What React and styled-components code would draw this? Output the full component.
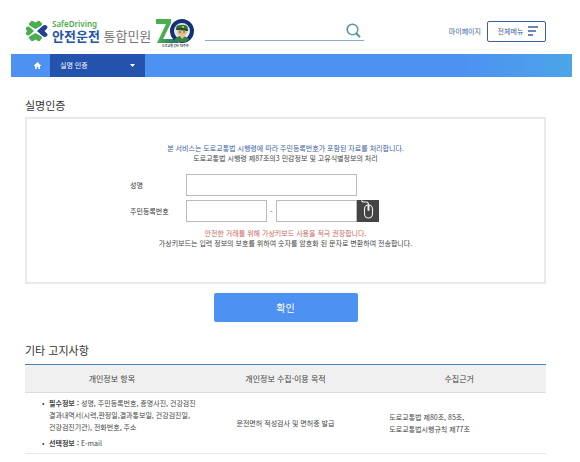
import React from "react"
import styled, { createGlobalStyle, ThemeProvider } from "styled-components"

const theme = {
  color: {
    primary: "#4d91f2",
    primaryDark: "#2453ae",
    link: "#3c5f9e",
    text: "#444",
    heading: "#333",
    warning: "#c9685c",
    line: "#e9e9e9",
    green: "#4bad50"
  }
}

const GlobalStyle = createGlobalStyle`
  * {
    box-sizing: border-box;
  }

  body {
    margin: 0;
    background: #fff;
    color: #444;
    font: 7px/11px "Noto Sans CJK KR", "Noto Sans", sans-serif;
    word-break: keep-all;
  }

  a {
    color: inherit;
    text-decoration: none;
  }

  button, input {
    font: inherit;
  }
`

const StyledPage = styled.div`
  padding: 0 8px 0 11px;
`

const StyledHeader = styled.header`
  display: flex;
  align-items: center;
  height: 54px;
  padding: 8px 26px 0 14px;
`

const StyledBrand = styled.a`
  display: flex;
  align-items: center;
  gap: 4px;
`

const StyledBrandText = styled.span`
  display: flex;
  flex-direction: column;
  padding: 1px 1px 0 0;
  white-space: nowrap;
`

const StyledBrandSub = styled.span(
  ({ theme }) => `
  font: 600 8px/8px "Noto Sans", sans-serif;
  color: ${theme.color.green};
`
)

const StyledBrandName = styled.span`
  font-size: 13px;
  line-height: 16px;
  color: #777;

  strong {
    color: #2453a6;
  }
`

const StyledAnniversary = styled.span`
  display: flex;
  flex-direction: column;
  align-items: center;
  padding-top: 6px;
  font-size: 3px;
  font-weight: 700;
  line-height: 6px;
  color: #333;
`

const StyledSearch = styled.form`
  display: flex;
  flex: 0 1 159px;
  min-width: 60px;
  height: 20px;
  margin-left: 11px;
  border-bottom: 1px solid #8cabd0;
`

const StyledSearchInput = styled.input`
  flex: 1;
  min-width: 0;
  padding: 0;
  border: 0;
  outline: 0;
  background: none;
`

const StyledIconButton = styled.button`
  display: flex;
  padding: 2px 3px;
  border: 0;
  background: none;
`

const StyledHeaderLinks = styled.div(
  ({ theme }) => `
  display: flex;
  align-items: center;
  gap: 6px;
  margin-left: auto;
  white-space: nowrap;
  color: ${theme.color.link};
`
)

const StyledMenuButton = styled.button(
  ({ theme }) => `
  display: flex;
  align-items: center;
  justify-content: center;
  gap: 4px;
  width: 59px;
  height: 21px;
  padding: 0 0 0 4px;
  border: 1px solid ${theme.color.link};
  border-radius: 2px;
  background: #fff;
  color: ${theme.color.link};
`
)

const StyledNav = styled.nav(
  ({ theme }) => `
  display: flex;
  height: 23px;
  background: linear-gradient(90deg, ${theme.color.primary} 80%, #4ca5e7);
  color: #fff;
`
)

const StyledHomeLink = styled.a`
  display: flex;
  align-items: center;
  justify-content: center;
  width: 39px;
  padding-left: 14px;
`

const StyledNavButton = styled.button(
  ({ theme }) => `
  display: flex;
  align-items: center;
  justify-content: space-between;
  width: 95px;
  padding: 0 10px;
  border: 0;
  background: ${theme.color.primaryDark};
  color: #fff;
`
)

const StyledMain = styled.main`
  padding: 20px 26px 0 14px;
`

const StyledTitle = styled.h2(
  ({ theme }) => `
  margin: 0;
  font-size: 11px;
  font-weight: 400;
  line-height: 16px;
  color: ${theme.color.heading};
`
)

const StyledPanel = styled.form(
  ({ theme }) => `
  margin-top: 4px;
  padding: 24px 12px 34px;
  border: 2px solid ${theme.color.line};
  text-align: center;
`
)

const StyledText = styled.p(
  ({ theme, $tone }) => `
  margin: 0;
  line-height: 10px;
  color: ${theme.color[$tone || "text"]};
`
)

const StyledFields = styled.div`
  display: grid;
  gap: 4px;
  max-width: 311px;
  margin: 11px auto 6px;
`

const StyledField = styled.div`
  display: flex;
  align-items: center;
  text-align: left;
`

const StyledLabel = styled.label`
  flex: 0 0 56px;
  color: #333;
`

const StyledInput = styled.input`
  width: ${({ $wide }) => ($wide ? "171px" : "81px")};
  height: 22px;
  padding: 0 4px;
  border: 1px solid #bbb;
  background: #fff;
`

const StyledDash = styled.span`
  width: 9px;
  text-align: center;
`

const StyledKeypadButton = styled.button`
  display: flex;
  width: 22px;
  height: 22px;
  padding: 0;
  border: 0;
  background: #444;
`

const StyledSubmit = styled.button(
  ({ theme }) => `
  display: block;
  width: 144px;
  height: 29px;
  margin: 9px auto 20px;
  padding: 0;
  border: 0;
  border-radius: 2px;
  background: ${theme.color.primary};
  color: #fff;
  font-size: 10px;
`
)

const StyledTable = styled.table(
  ({ theme }) => `
  width: 100%;
  margin-top: 6px;
  border-spacing: 0;
  border-bottom: 1px solid ${theme.color.line};
  table-layout: fixed;
  line-height: 12px;
`
)

const StyledHeadCell = styled.th`
  height: 29px;
  padding: 0;
  border-top: 1px solid #4f80b5;
  border-bottom: 1px solid #ddd;
  background: #f0f0f0;
  font-size: 8px;
  font-weight: 400;
`

const StyledCell = styled.td`
  padding: ${({ $padding }) => $padding || "4px"};
  text-align: ${({ $align }) => $align || "left"};
`

const StyledList = styled.ul`
  display: grid;
  gap: 4px;
  margin: 0;
  padding: 0;
  list-style: none;

  li {
    display: flex;
    gap: 4px;
  }

  li::before {
    content: "•";
    flex: 0 0 3px;
  }
`

const CloverLogo = () => (
  <svg width="23" height="22" viewBox="0 0 23 22" aria-hidden="true">
    <g fill="#4bad50">
      <path d="M10.5 9 4.800 5.800Q2.800 3.600 5.200 2.600Q5.600 .4 8 1L10.5 2.600 13 1Q15.400 .4 15.800 2.600Q18.200 3.600 16.200 5.800Z" />
      <path d="M10.5 13 4.800 16.200Q2.800 18.400 5.200 19.400Q5.600 21.600 8 21L10.5 19.400 13 21Q15.400 21.600 15.800 19.400Q18.200 18.400 16.200 16.200Z" />
      <path d="M9 11 5 14.800Q2.800 16.200 1.200 14.500Q.2 13 2 11Q.2 9 1.200 7.500Q2.800 5.800 5 7.200Z" />
    </g>
    <path d="M12 11 17.500 6Q19.500 4.500 21.500 5.500Q23.200 7 22 8.500L19.500 11 22 13.500Q23.200 15 21.500 16.500Q19.500 17.500 17.500 16Z" fill="#24408f" />
  </svg>
)

const SeventyLogo = () => (
  <svg width="38" height="24" viewBox="0 0 38 24" aria-hidden="true">
    <defs>
      <linearGradient id="seven" x2="1" y2="1">
        <stop offset=".5" stopColor="#4bad50" />
        <stop offset="1" stopColor="#176b78" />
      </linearGradient>
    </defs>
    <path d="M0 0H15V4L7 20H22V24H1L10 5H0Z" fill="url(#seven)" />
    <circle cx="26" cy="12" r="10" fill="#d7edf1" stroke="#162f78" strokeWidth="4" />
    <path d="M18 22Q20 17 25 17T33 20L30 23H19Z" fill="#398342" />
    <path d="M24 17 26 20 29 17V15H24Z" fill="#e8c694" />
    <ellipse cx="26" cy="13" rx="5" ry="4" fill="#e9bb86" />
    <path d="M20 11Q19 6 24 6Q31 5 32 9L31 12 22 11Z" fill="#3b7338" />
    <path d="M21 10.500Q27 8.500 32 11.500" fill="none" stroke="#23452e" strokeWidth="1.500" />
    <circle cx="24" cy="13" r=".7" fill="#333" />
    <circle cx="28" cy="13" r=".7" fill="#333" />
    <circle cx="27" cy="8" r="1" fill="#d9d85b" />
  </svg>
)

const SearchIcon = () => (
  <svg width="15" height="16" viewBox="0 0 15 16" fill="none" aria-hidden="true">
    <defs>
      <linearGradient id="glass" x2="1" y2="1">
        <stop stopColor="#4b86b4" />
        <stop offset="1" stopColor="#69ad91" />
      </linearGradient>
    </defs>
    <g stroke="url(#glass)" strokeWidth="1.600">
      <circle cx="6.500" cy="6.500" r="5.300" />
      <path d="M10.200 10.200 14 14.200" strokeWidth="2" />
    </g>
  </svg>
)

const MenuIcon = () => (
  <svg width="12" height="10" viewBox="0 0 12 10" aria-hidden="true">
    <path d="M1 1H11M1 5H9M1 9H6" stroke="#3c5f9e" strokeWidth="1.600" />
  </svg>
)

const HomeIcon = () => (
  <svg width="7" height="7" viewBox="0 0 7 7" fill="#fff" aria-hidden="true">
    <path d="M3.500 0 7 3.500V4H6V7H4.300V4.800H2.700V7H1V4H0V3.500Z" />
  </svg>
)

const CaretIcon = () => (
  <svg width="5" height="3" viewBox="0 0 5 3" fill="#fff" aria-hidden="true">
    <path d="M0 0H5L2.500 3Z" />
  </svg>
)

const MouseIcon = () => (
  <svg width="22" height="22" viewBox="0 0 22 22" fill="none" stroke="#eee" aria-hidden="true">
    <path d="M4.500 .5Q5 2 7 2H9.500Q11.500 2 11.500 5" strokeWidth="1.100" />
    <rect x="7.500" y="5" width="8" height="13" rx="4" strokeWidth="1.100" />
    <path d="M11.500 5V10" strokeWidth="2" strokeLinecap="round" />
  </svg>
)

export default () => (
  <ThemeProvider theme={theme}>
    <GlobalStyle />
    <StyledPage lang="ko">
      <StyledHeader>
        <StyledBrand href="#">
          <CloverLogo />
          <StyledBrandText>
            <StyledBrandSub>SafeDriving</StyledBrandSub>
            <StyledBrandName>
              <strong>안전운전</strong> 통합민원
            </StyledBrandName>
          </StyledBrandText>
          <StyledAnniversary>
            <SeventyLogo />
            도로교통공단 70주년
          </StyledAnniversary>
        </StyledBrand>
        <StyledSearch role="search">
          <StyledSearchInput type="search" aria-label="검색어" />
          <StyledIconButton type="submit" aria-label="검색">
            <SearchIcon />
          </StyledIconButton>
        </StyledSearch>
        <StyledHeaderLinks>
          <a href="#mypage">마이페이지</a>
          <StyledMenuButton type="button">
            전체메뉴
            <MenuIcon />
          </StyledMenuButton>
        </StyledHeaderLinks>
      </StyledHeader>

      <StyledNav>
        <StyledHomeLink href="#" aria-label="홈">
          <HomeIcon />
        </StyledHomeLink>
        <StyledNavButton type="button">
          실명 인증
          <CaretIcon />
        </StyledNavButton>
      </StyledNav>

      <StyledMain>
        <StyledTitle>실명인증</StyledTitle>
        <StyledPanel id="verify">
          <StyledText $tone="link">
            본 서비스는 도로교통법 시행령에 따라 주민등록번호가 포함된 자료를
            처리합니다.
          </StyledText>
          <StyledText>
            도로교통법 시행령 제87조의3 민감정보 및 고유식별정보의 처리
          </StyledText>
          <StyledFields>
            <StyledField>
              <StyledLabel htmlFor="name">성명</StyledLabel>
              <StyledInput id="name" type="text" $wide />
            </StyledField>
            <StyledField>
              <StyledLabel htmlFor="rrn">주민등록번호</StyledLabel>
              <StyledInput id="rrn" type="text" inputMode="numeric" />
              <StyledDash>-</StyledDash>
              <StyledInput type="password" aria-label="주민등록번호 뒷자리" />
              <StyledKeypadButton type="button" aria-label="가상키보드">
                <MouseIcon />
              </StyledKeypadButton>
            </StyledField>
          </StyledFields>
          <StyledText $tone="warning">
            안전한 거래를 위해 가상키보드 사용을 적극 권장합니다.
          </StyledText>
          <StyledText>
            가상키보드는 입력 정보의 보호를 위하여 숫자를 암호화 된 문자로
            변환하여 전송합니다.
          </StyledText>
        </StyledPanel>
        <StyledSubmit type="submit" form="verify">
          확인
        </StyledSubmit>

        <StyledTitle>기타 고지사항</StyledTitle>
        <StyledTable>
          <thead>
            <tr>
              <StyledHeadCell scope="col">개인정보 항목</StyledHeadCell>
              <StyledHeadCell scope="col">개인정보 수집·이용 목적</StyledHeadCell>
              <StyledHeadCell scope="col">수집근거</StyledHeadCell>
            </tr>
          </thead>
          <tbody>
            <tr>
              <StyledCell $padding="4px 2px 4px 17px">
                <StyledList>
                  <li>
                    <span>
                      <strong>필수정보 :</strong> 성명, 주민등록번호, 증명사진,
                      건강검진 결과내역서(시력,판정일,결과통보일, 건강검진일,
                      건강검진기관), 전화번호, 주소
                    </span>
                  </li>
                  <li>
                    <span>
                      <strong>선택정보 :</strong> E-mail
                    </span>
                  </li>
                </StyledList>
              </StyledCell>
              <StyledCell $align="center">
                운전면허 적성검사 및 면허증 발급
              </StyledCell>
              <StyledCell $padding="4px 4px 4px 17px">
                도로교통법 제80조, 85조,
                <br />
                도로교통법시행규칙 제77조
              </StyledCell>
            </tr>
          </tbody>
        </StyledTable>
      </StyledMain>
    </StyledPage>
  </ThemeProvider>
)
